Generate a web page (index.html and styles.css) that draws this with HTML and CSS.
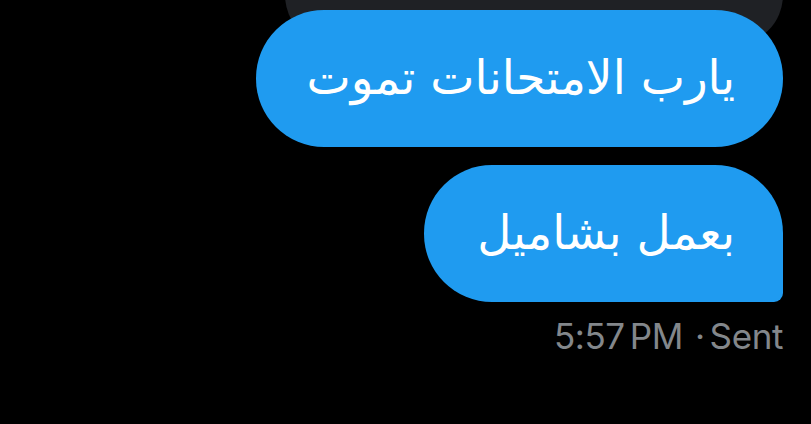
FILE: index.html
```html
<!DOCTYPE html>
<html lang="ar">
<head>
    <meta charset="UTF-8">
    <meta name="viewport" content="width=device-width, initial-scale=1.0">
    <title>Messages</title>
    <link rel="stylesheet" href="styles.css">
</head>
<body>
    <div class="thread">
        <div class="bubble-quoted"></div>
        <div class="bubble bubble-first" dir="rtl">يارب الامتحانات تموت</div>
        <div class="bubble bubble-last" dir="rtl">بعمل بشاميل</div>
        <div class="meta" dir="ltr">5:57<span class="ampm">PM</span><span class="dot">·</span>Sent</div>
    </div>
</body>
</html>
```
FILE: styles.css
```css
body {
    margin: 0;
    background-color: #000;
    height: 424px;
    overflow: hidden;
}
.thread {
    display: flex;
    flex-direction: column;
    align-items: flex-end;
    padding-right: 28px;
}
.bubble-quoted {
    width: 498px;
    height: 110px;
    margin-top: -65px;
    background-color: #1f2125;
    border-radius: 50px;
}
.bubble {
    background-color: #1f9bf0;
    color: #fff;
    font-family: "DejaVu Sans", sans-serif;
    font-size: 47px;
    line-height: 40px;
    padding: 48px 48px 49px 50px;
    border-radius: 68px;
    white-space: nowrap;
}
.bubble-first {
    margin-top: -35px;
}
.bubble-last {
    margin-top: 18px;
    padding-left: 53px;
    border-bottom-right-radius: 9px;
}
.meta {
    margin-top: 13px;
    font-family: "Inter", sans-serif;
    font-size: 35px;
    color: #83878b;
    letter-spacing: -0.4px;
}
.ampm {
    margin-left: 5px;
}
.dot {
    margin-left: 12px;
    margin-right: 5px;
}
```
